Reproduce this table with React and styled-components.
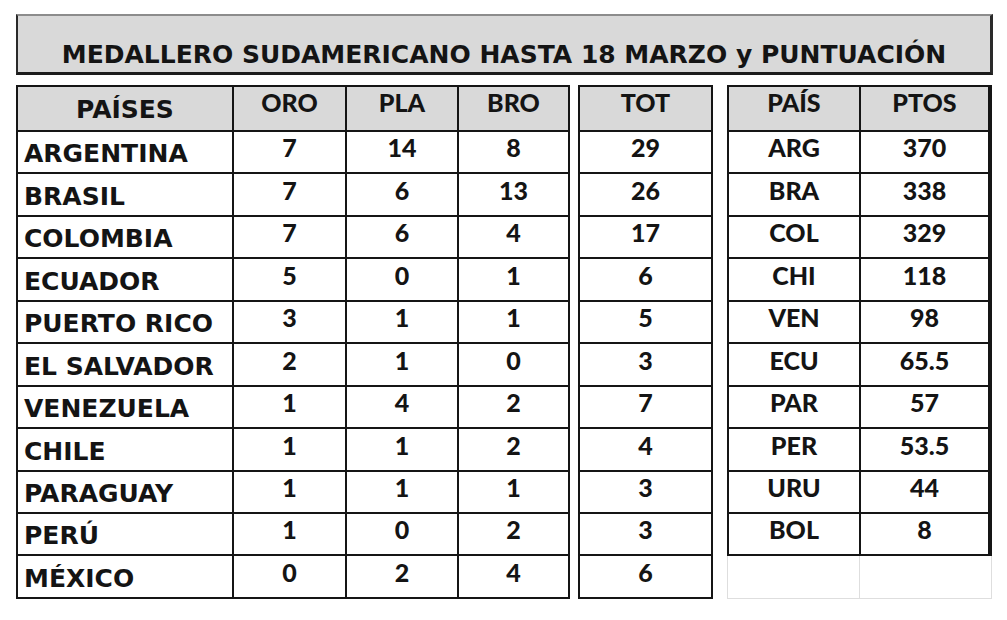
import React from "react";
import styled, { createGlobalStyle } from "styled-components";

const GlobalStyle = createGlobalStyle`
  body {
    margin: 0;
    background: #ffffff;
  }
`;

const VERDANA = `"DejaVu Sans", Verdana, sans-serif`;
const CALIBRI = `Lato, "Open Sans", sans-serif`;

const medals = [
  ["ARGENTINA", 7, 14, 8, 29],
  ["BRASIL", 7, 6, 13, 26],
  ["COLOMBIA", 7, 6, 4, 17],
  ["ECUADOR", 5, 0, 1, 6],
  ["PUERTO RICO", 3, 1, 1, 5],
  ["EL SALVADOR", 2, 1, 0, 3],
  ["VENEZUELA", 1, 4, 2, 7],
  ["CHILE", 1, 1, 2, 4],
  ["PARAGUAY", 1, 1, 1, 3],
  ["PERÚ", 1, 0, 2, 3],
  ["MÉXICO", 0, 2, 4, 6],
];

const points = [
  ["ARG", "370"],
  ["BRA", "338"],
  ["COL", "329"],
  ["CHI", "118"],
  ["VEN", "98"],
  ["ECU", "65.5"],
  ["PAR", "57"],
  ["PER", "53.5"],
  ["URU", "44"],
  ["BOL", "8"],
];

const Page = styled.div`
  padding: 14px 0 0 16px;
  color: #141414;
`;

const Title = styled.div`
  box-sizing: border-box;
  width: 977px;
  height: 61px;
  background: #d9d9d9;
  border-top: 2px solid #8c8c8c;
  border-left: 2px solid #2a2a2a;
  border-right: 3px solid #2a2a2a;
  border-bottom: 3px solid #1c1c1c;
  display: flex;
  align-items: flex-end;
  justify-content: center;
  padding-bottom: 5px;
  font-family: ${VERDANA};
  font-weight: 700;
  font-size: 25px;
  line-height: 1;
  white-space: nowrap;
`;

const Sheet = styled.div`
  display: flex;
  align-items: flex-start;
  margin-top: 10px;
`;

const Block = styled.div`
  display: grid;
  grid-template-columns: ${(p) => p.cols};
  grid-template-rows: ${(p) => p.rows};
  gap: 2px;
  padding: 2px;
  background: #151515;
  margin-left: ${(p) => p.offset || 0}px;
`;

const Cell = styled.div`
  display: flex;
  align-items: flex-end;
  justify-content: ${(p) => (p.left ? "flex-start" : "center")};
  background: ${(p) => (p.head ? "#d9d9d9" : "#ffffff")};
  padding: ${(p) => (p.left ? "0 0 0 6px" : "0")};
  padding-bottom: ${(p) => p.pb}px;
  font-family: ${(p) => (p.verdana ? VERDANA : CALIBRI)};
  font-weight: ${(p) => (p.verdana ? 700 : 900)};
  font-size: 25px;
  line-height: 1;
  white-space: nowrap;
  overflow: hidden;
`;

const PointsColumn = styled.div`
  display: flex;
  flex-direction: column;
  margin-left: 14px;
`;

const GhostRow = styled.div`
  display: grid;
  grid-template-columns: 132px 133px;
  height: 42px;
  border-bottom: 1px solid #dedede;
`;

const GhostCell = styled.div`
  border-left: 1px solid #dedede;
  &:last-child {
    border-right: 1px solid #dedede;
  }
`;

const HEAD_ROW = "43px";
const ROW = "40.45px";

export default function App() {
  return (
    <>
      <GlobalStyle />
      <Page>
        <Title>MEDALLERO SUDAMERICANO HASTA 18 MARZO y PUNTUACIÓN</Title>
        <Sheet>
          <Block
            cols="214px 111px 110px 109px"
            rows={`${HEAD_ROW} repeat(11, ${ROW})`}
          >
            <Cell head verdana pb={8}>
              PAÍSES
            </Cell>
            <Cell head pb={15}>
              ORO
            </Cell>
            <Cell head pb={15}>
              PLA
            </Cell>
            <Cell head pb={15}>
              BRO
            </Cell>
            {medals.map(([name, oro, pla, bro]) => (
              <React.Fragment key={name}>
                <Cell left verdana pb={6}>
                  {name}
                </Cell>
                <Cell pb={12}>{oro}</Cell>
                <Cell pb={12}>{pla}</Cell>
                <Cell pb={12}>{bro}</Cell>
              </React.Fragment>
            ))}
          </Block>

          <Block
            offset={8}
            cols="131px"
            rows={`${HEAD_ROW} repeat(11, ${ROW})`}
          >
            <Cell head pb={15}>
              TOT
            </Cell>
            {medals.map((m) => (
              <Cell key={m[0]} pb={12}>
                {m[4]}
              </Cell>
            ))}
          </Block>

          <PointsColumn>
            <Block cols="130px 127px" rows={`${HEAD_ROW} repeat(10, ${ROW})`}>
              <Cell head pb={15}>
                PAÍS
              </Cell>
              <Cell head pb={15}>
                PTOS
              </Cell>
              {points.map(([code, pts]) => (
                <React.Fragment key={code}>
                  <Cell pb={12}>{code}</Cell>
                  <Cell pb={12}>{pts}</Cell>
                </React.Fragment>
              ))}
            </Block>
            <GhostRow>
              <GhostCell />
              <GhostCell />
            </GhostRow>
          </PointsColumn>
        </Sheet>
      </Page>
    </>
  );
}
